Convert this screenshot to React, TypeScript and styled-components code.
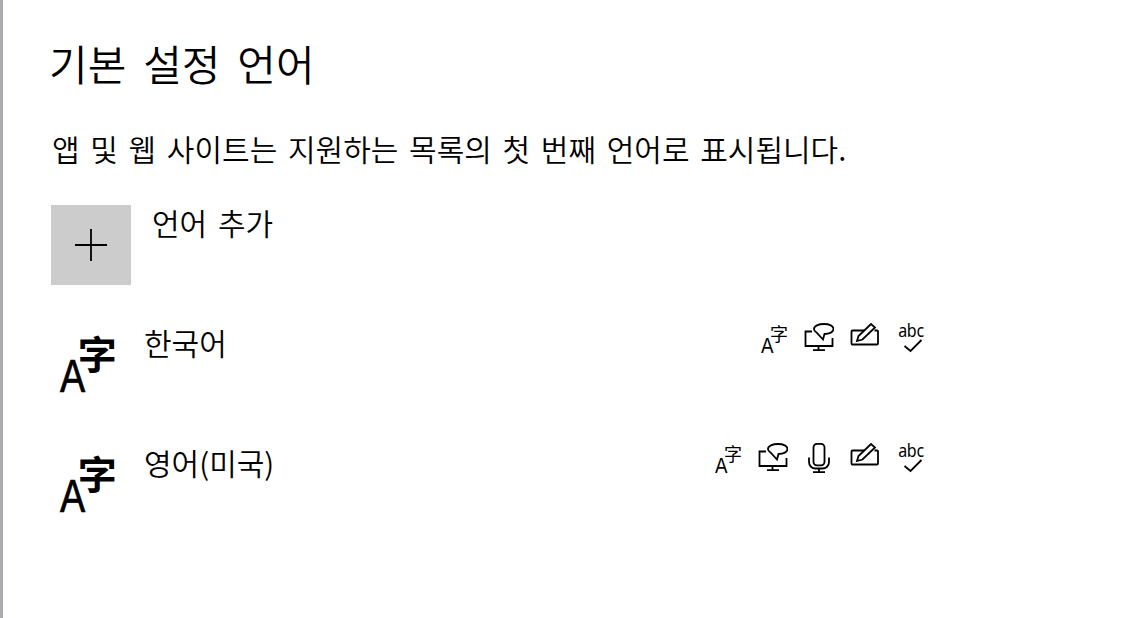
import styled, { createGlobalStyle } from "styled-components";

const GlobalStyle = createGlobalStyle`
    html, body {
        margin: 0;
        padding: 0;
        background: #ffffff;
    }
    body {
        font-family: "Noto Sans CJK KR", "Noto Sans", sans-serif;
        color: #000000;
    }
`

const Page = styled.div`
    width: 1146px;
    height: 618px;
    box-sizing: border-box;
    border-left: 3px solid #a9abaf;
    padding: 35px 0 0 46px;
    overflow: hidden;
`

const Title = styled.h1`
    margin: 0;
    font-size: 42px;
    font-weight: 350;
    line-height: 56px;
    word-spacing: 7.5px;
`

const Description = styled.p`
    margin: 37px 0 0 3px;
    font-size: 30px;
    font-weight: 350;
    line-height: 40px;
    word-spacing: 4px;
    white-space: nowrap;
`

const Content = styled.div`
    width: 875px;
    margin: 0 0 0 2px;
`

const AddRow = styled.div`
    display: flex;
    gap: 21px;
    margin-top: 37px;
`

const AddButton = styled.button`
    width: 80px;
    height: 80px;
    padding: 0;
    border: 0;
    background: #cccccc;
    display: flex;
    align-items: center;
    justify-content: center;
`

const AddLabel = styled.div`
    font-size: 30px;
    font-weight: 350;
    line-height: 40px;
    word-spacing: 4px;
    margin-top: -3px;
`

const LangRow = styled.div`
    display: flex;
    height: 120px;
    padding-top: 50px;
    box-sizing: border-box;
`

const LangGlyph = styled.div`
    flex: none;
    display: flex;
    align-items: flex-start;
    width: 93px;
    padding-left: 9px;
    box-sizing: border-box;
`

const LangLabel = styled.div`
    flex: 1;
    font-size: 30px;
    font-weight: 350;
    line-height: 40px;
    margin-top: -13px;
`

const Features = styled.div`
    flex: none;
    display: flex;
    gap: 16px;
    margin-top: -12px;
`

const Slot = styled.div`
    position: relative;
    width: 30px;
    height: 30px;
    font-family: "Noto Sans", sans-serif;
`

const BigA = styled.span`
    font-family: "Liberation Sans", sans-serif;
    font-size: 46px;
    line-height: 46px;
    margin-top: 18px;
    transform: scaleX(0.82);
    transform-origin: left center;
    -webkit-text-stroke: 0.7px #000000;
`

const BigHan = styled.span`
    font-family: "Noto Sans CJK SC", sans-serif;
    font-size: 39px;
    font-weight: 700;
    line-height: 39px;
    margin-left: -13px;
    margin-top: -2px;
`

const SmallA = styled.span`
    position: absolute;
    left: 3px;
    top: 11px;
    font-family: "Liberation Sans", sans-serif;
    font-size: 22px;
    line-height: 24px;
    transform: scaleX(0.85);
    transform-origin: left center;
`

const SmallHan = styled.span`
    position: absolute;
    left: 12px;
    top: 1px;
    font-family: "Noto Sans CJK SC", sans-serif;
    font-size: 18px;
    font-weight: 400;
    line-height: 18px;
`

const AbcText = styled.span`
    display: block;
    text-align: center;
    font-size: 16px;
    font-weight: 400;
    line-height: 18px;
    letter-spacing: -0.3px;
    margin-top: -2px;
    transform: scaleY(1.12);
`

const Icon = styled.svg`
    display: block;
    fill: none;
    stroke: #000000;
    stroke-width: 1.8;
`

const CheckIcon = styled(Icon)`
    position: absolute;
    left: 0;
    top: 0;
`

function LanguageFeature() {
    return (
        <Slot>
            <SmallA>A</SmallA>
            <SmallHan>字</SmallHan>
        </Slot>
    )
}

function SpeechFeature() {
    return (
        <Slot>
            <Icon width="30" height="30" viewBox="0 0 30 30">
                <path d="M8 8.5H1.5V23H28.5V15" />
                <path d="M14.5 23V27M9 27.2H21" />
                <path d="M12.5 9.5C10.8 8.5 10 7.3 10 6C10 3 14.5 1 20 1C25.5 1 29.5 3 29.5 6C29.5 9 25.5 11 20.5 11L19 16.5Z" />
            </Icon>
        </Slot>
    )
}

function MicFeature() {
    return (
        <Slot>
            <Icon width="30" height="30" viewBox="0 0 30 30">
                <rect x="9.5" y="0.8" width="11" height="21.5" rx="3.5" />
                <path d="M5 14.5V19C5 23 8 25.5 11.5 25.5H18.5C22 25.5 25 23 25 19V14.5" />
                <path d="M15 25.5V29M9 29.2H21" />
            </Icon>
        </Slot>
    )
}

function HandwritingFeature() {
    return (
        <Slot>
            <Icon width="30" height="30" viewBox="0 0 30 30">
                <path d="M14 7.5H2.5a1 1 0 0 0-1 1V20.5a1 1 0 0 0 1 1H27a1 1 0 0 0 1-1V8.5a1 1 0 0 0-1-1H24.5" />
                <path d="M7 18L8.5 13L21 1L25 4.5L12.5 16.5Z" />
            </Icon>
        </Slot>
    )
}

function SpellFeature() {
    return (
        <Slot>
            <AbcText>abc</AbcText>
            <CheckIcon width="30" height="30" viewBox="0 0 30 30">
                <path d="M8.5 23L14.5 28L25.5 17" />
            </CheckIcon>
        </Slot>
    )
}

interface Language {
    name: string;
    hasMic: boolean;
}

const languages: Language[] = [
    { name: "한국어", hasMic: false },
    { name: "영어(미국)", hasMic: true },
]

function App() {
    return (
        <Page>
            <GlobalStyle />
            <Title>기본 설정 언어</Title>
            <Description>앱 및 웹 사이트는 지원하는 목록의 첫 번째 언어로 표시됩니다.</Description>
            <Content>
                <AddRow>
                    <AddButton aria-label="언어 추가">
                        <Icon width="32" height="32" viewBox="0 0 32 32">
                            <path d="M16 0V32M0 16H32" />
                        </Icon>
                    </AddButton>
                    <AddLabel>언어 추가</AddLabel>
                </AddRow>
                {languages.map((lang) => (
                    <LangRow key={lang.name}>
                        <LangGlyph>
                            <BigA>A</BigA>
                            <BigHan>字</BigHan>
                        </LangGlyph>
                        <LangLabel>{lang.name}</LangLabel>
                        <Features>
                            <LanguageFeature />
                            <SpeechFeature />
                            {lang.hasMic && <MicFeature />}
                            <HandwritingFeature />
                            <SpellFeature />
                        </Features>
                    </LangRow>
                ))}
            </Content>
        </Page>
    )
}

export default App
